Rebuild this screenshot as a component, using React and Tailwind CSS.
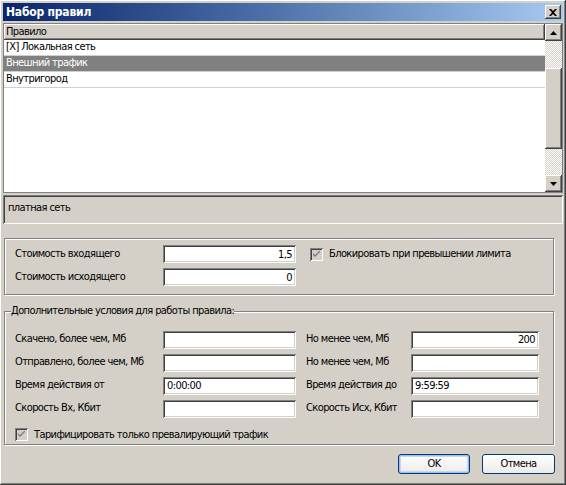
import React from 'react';

const raised = 'shadow-[inset_-1px_-1px_#404040,inset_1px_1px_#ffffff,inset_-2px_-2px_#808080,inset_2px_2px_#d4d0c8]';
const sunken = 'shadow-[inset_1px_1px_#808080,inset_-1px_-1px_#ffffff,inset_2px_2px_#404040,inset_-2px_-2px_#d4d0c8]';
const etched = 'border border-[#808080] shadow-[1px_1px_0_#ffffff,inset_1px_1px_0_#ffffff]';

const Field = ({ value = '', align = 'right', w = 'w-[133px]' }) => (
    <div className={`${w} h-[18px] bg-white ${sunken} flex items-center px-[4px] ${align === 'right' ? 'justify-end' : 'justify-start'}`}>
        <span className="leading-none">{value}</span>
    </div>
);

const CheckBox = ({ label }) => (
    <div className="flex items-center gap-[6px]">
        <div className={`w-[13px] h-[13px] bg-[#d4d0c8] ${sunken} flex items-center justify-center`}>
            <svg width="7" height="7" viewBox="0 0 7 7">
                <path d="M0 2 L0 4 L2 6 L7 1 L7 -1 L2 4 Z" fill="#808080" />
            </svg>
        </div>
        <span>{label}</span>
    </div>
);

const ScrollBtn = ({ up }) => (
    <div className={`w-[17px] h-[17px] bg-[#d4d0c8] ${raised} flex items-center justify-center`}>
        <svg width="7" height="4" viewBox="0 0 7 4">
            {up ? <path d="M3.5 0 L7 4 L0 4 Z" fill="#000" /> : <path d="M0 0 L7 0 L3.5 4 Z" fill="#000" />}
        </svg>
    </div>
);

const rules = [
    { name: '[X] Локальная сеть' },
    { name: 'Внешний трафик', selected: true },
    { name: 'Внутригород' },
];

const App = () => {
    return (
        <div className={`w-[566px] h-[485px] bg-[#d4d0c8] p-[3px] flex flex-col text-[11px] tracking-[-0.6px] text-black font-['DejaVu_Sans_Condensed','Liberation_Sans',sans-serif] ${raised}`}>
            {/* title bar */}
            <div className="h-[18px] flex items-center justify-between pl-[3px] pr-[2px] bg-gradient-to-r from-[#0a246a] to-[#a6caf0]">
                <span className="text-white font-bold text-[12px] tracking-[-0.2px]">Набор правил</span>
                <div className={`w-[16px] h-[14px] bg-[#d4d0c8] ${raised} flex items-center justify-center`}>
                    <svg width="8" height="7" viewBox="0 0 8 7">
                        <path d="M0 0 H2 L4 2 L6 0 H8 L5 3.5 L8 7 H6 L4 5 L2 7 H0 L3 3.5 Z" fill="#000" />
                    </svg>
                </div>
            </div>

            {/* rule list */}
            <div className="mt-[2px] h-[170px] bg-white border border-[#808080] flex">
                <div className="flex-1 flex flex-col">
                    <div className={`h-[16px] bg-[#d4d0c8] ${raised} flex items-center pl-[2px]`}>Правило</div>
                    {rules.map(r => (
                        <div
                            key={r.name}
                            className={`h-[16px] flex items-center pl-[2px] border-b border-[#d4d0c8] ${r.selected ? 'bg-[#808080] text-white' : 'bg-white'}`}
                        >
                            {r.name}
                        </div>
                    ))}
                </div>
                <div className="w-[17px] flex flex-col bg-[repeating-conic-gradient(#ffffff_0_25%,#d4d0c8_0_50%)] bg-[length:2px_2px]">
                    <ScrollBtn up />
                    <div className="h-[27px]" />
                    <div className={`h-[81px] bg-[#d4d0c8] ${raised}`} />
                    <div className="flex-1" />
                    <ScrollBtn />
                </div>
            </div>

            {/* description */}
            <div className={`mt-[2px] h-[29px] ${sunken} pl-[5px] pt-[5px]`}>платная сеть</div>

            {/* cost group */}
            <div className={`mt-[14px] ml-[1px] w-[550px] h-[57px] ${etched} flex pl-[10px] pt-[6px]`}>
                <div className="flex flex-col gap-[5px]">
                    <div className="flex items-center">
                        <span className="w-[148px]">Стоимость входящего</span>
                        <Field value="1,5" />
                    </div>
                    <div className="flex items-center">
                        <span className="w-[148px]">Стоимость исходящего</span>
                        <Field value="0" />
                    </div>
                </div>
                <div className="ml-[14px] pt-[1px]">
                    <CheckBox label="Блокировать при превышении лимита" />
                </div>
            </div>

            {/* extra conditions */}
            <fieldset className={`mt-[8px] ml-[1px] w-[550px] h-[142px] min-w-0 ${etched} pl-[10px] pr-0 pt-[11px]`}>
                <legend className="ml-[-4px] px-0 bg-[#d4d0c8]">Дополнительные условия для работы правила:</legend>
                <div className="grid grid-cols-[148px_133px_115px_128px] gap-y-[5px] items-center whitespace-nowrap">
                    <span>Скачено, более чем, Мб</span>
                    <Field />
                    <span className="pl-[10px]">Но менее чем, Мб</span>
                    <Field value="200" w="w-[128px]" />

                    <span>Отправлено, более чем, Мб</span>
                    <Field />
                    <span className="pl-[10px]">Но менее чем, Мб</span>
                    <Field w="w-[128px]" />

                    <span>Время действия от</span>
                    <Field value="0:00:00" align="left" />
                    <span className="pl-[10px]">Время действия до</span>
                    <Field value="9:59:59" align="left" w="w-[128px]" />

                    <span>Скорость Вх, Кбит</span>
                    <Field />
                    <span className="pl-[10px]">Скорость Исх, Кбит</span>
                    <Field w="w-[128px]" />
                </div>
                <div className="mt-[9px]">
                    <CheckBox label="Тарифицировать только превалирующий трафик" />
                </div>
            </fieldset>

            {/* buttons */}
            <div className="mt-[9px] flex justify-end gap-[12px] pr-[8px]">
                <button className="w-[72px] h-[20px] rounded-[3px] border border-[#003c74] bg-gradient-to-b from-white to-[#ecebe6] shadow-[inset_0_0_0_1px_#9dbcf0,inset_0_0_0_2px_#c2d6f7]">OK</button>
                <button className="w-[73px] h-[20px] rounded-[3px] border border-[#003c74] bg-gradient-to-b from-white to-[#ecebe6]">Отмена</button>
            </div>
        </div>
    );
};

export default App;
